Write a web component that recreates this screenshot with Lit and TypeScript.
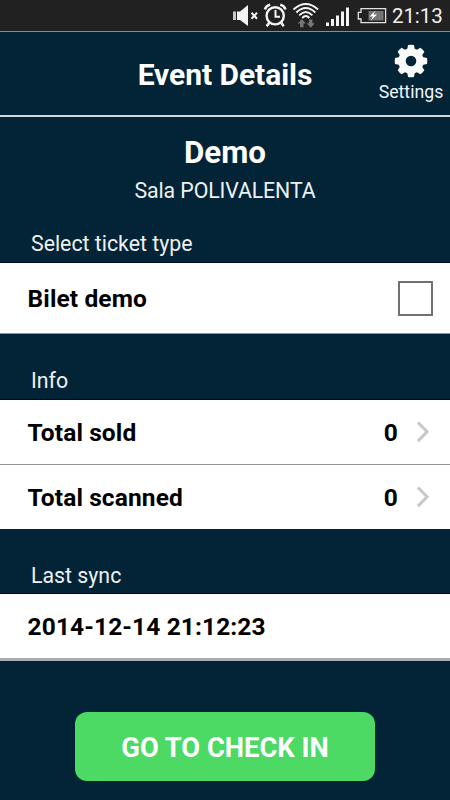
import { LitElement, html, css, svg } from "lit";
import { customElement, property } from "lit/decorators.js";

@customElement("status-bar")
class StatusBar extends LitElement {
  static styles = css`
    :host { display: block; box-sizing: border-box; height: 32px; background: #212121; }
    .icons { display: block; width: 392px; height: 30px; flex: none; }
    .time { font-size: 20.5px; line-height: 33px; color: #f2f2f2; white-space: nowrap; letter-spacing: -0.1px; }
    .bar { display: flex; width: 450px; height: 31px; border-bottom: 1px solid #8c8c8c; }
  `;
  render() {
    return html`<div class="bar">
      <svg class="icons" viewBox="0 0 392 30">
        <path d="M233 11.500h3v8.500h-3z" fill="#c8c8c8" />
        <path d="M237 11.500h3l8-6.500v21l-8-6h-3z" fill="#f4f4f4" />
        <path d="M251.500 12.800l5.500 6M257 12.800l-5.500 6" stroke="#f4f4f4" stroke-width="2" />
        <g fill="none" stroke="#f4f4f4">
          <circle cx="275.200" cy="15.800" r="8.600" stroke-width="2.400" />
          <path d="M275.500 10v6.800h4.500" stroke-width="2" />
          <path d="M265 9.500q1-3.800 5.200-4.700M285.400 9.500q-1-3.800-5.200-4.700" stroke-width="2.600" />
          <path d="M269.200 22.800l-2.500 3.500M281.200 22.800l2.500 3.500" stroke-width="2.600" />
        </g>
        <g fill="none" stroke="#f4f4f4" stroke-width="1.900">
          <path d="M293.500 9.500q12.300-11 24.600 0" />
          <path d="M296.300 12.500q9.500-9 19 0" />
          <path d="M299.200 15.300q6.600-6.600 13.200 0" />
          <path d="M302.200 18q3.600-4 7.200 0" />
        </g>
        <path d="M301.800 19l4 4.500h-2.300v3.800h-3.400v-3.800h-2.300zM310.700 27.700l-4-4.500h2.300v-3.800h3.400v3.800h2.300z" fill="#777" />
        <g fill="#f4f4f4">
          <path d="M326 22.500h3v3.500h-3zM331 19h3v7h-3zM336 15.500h3v10.500h-3zM341 11.500h3v14.500h-3zM346 7.500h3v18.500h-3z" />
        </g>
        <path d="M361 8.600h24.600v14h-24.600v-3.600h-2.700v-6.600h2.700z" fill="none" stroke="#e2e2e2" stroke-width="1.300" />
        <path d="M368.500 11h15v9.500h-15z" fill="#757575" />
        <path d="M375.500 10.500l-6 6h3.500l-2.500 4.500 6.500-6.500h-3.500z" fill="#fff" />
      </svg>
      <span class="time">21:13</span>
    </div>`;
  }
}

const teeth = [0, 45, 90, 135, 180, 225, 270, 315];

@customElement("page-header")
class PageHeader extends LitElement {
  static styles = css`
    :host { display: grid; grid-template-columns: 72px 1fr 72px; box-sizing: border-box; height: 85px; border-bottom: 2px solid #d2d5d6; color: #fff; }
    .title { grid-column: 2; text-align: center; font-size: 30px; font-weight: 700; line-height: 85px; white-space: nowrap; letter-spacing: -0.05px; }
    .settings { display: flex; flex-direction: column; align-items: center; padding: 12px 6px 0 0; }
    .gear { width: 34px; height: 34px; }
    .label { font-size: 17.700px; line-height: 24px; padding-top: 2px; white-space: nowrap; color: #f2f4f5; }
  `;
  render() {
    return html`
      <div class="title">Event Details</div>
      <div class="settings">
        <svg class="gear" viewBox="-17 -17 34 34">
          ${teeth.map((a) => svg`<path transform="rotate(${a})" d="M-4.200-10l1.300-6q2.900-.6 5.800 0l1.300 6z" fill="#fafafa" />`)}
          <circle r="9" fill="none" stroke="#fafafa" stroke-width="7.400" />
        </svg>
        <div class="label">Settings</div>
      </div>`;
  }
}

@customElement("list-row")
class ListRow extends LitElement {
  @property() label = "";
  @property() value = "";
  @property() accessory = "none";
  static styles = css`
    :host { display: flex; align-items: center; background: #fff; color: #000; padding: 0 17px 0 27.600px; font-weight: 700; font-size: 24.500px; letter-spacing: 0.110px; }
    .label { flex: 1; white-space: nowrap; line-height: 30px; padding-top: 2px; }
    .value { line-height: 30px; padding-top: 2px; }
    .box { box-sizing: border-box; width: 35px; height: 35px; border: 2px solid #717171; margin-top: 1px; }
    .chevron { width: 14px; height: 24px; margin: 0 3px 0 18px; }
  `;
  render() {
    return html`
      <span class="label">${this.label}</span>
      ${this.value ? html`<span class="value">${this.value}</span>` : ""}
      ${this.accessory === "check" ? html`<span class="box"></span>` : ""}
      ${this.accessory === "chevron"
        ? html`<svg class="chevron" viewBox="0 0 14 24"><path d="M2 2.500l9 9.300-9 9.300" fill="none" stroke="#c7c7cc" stroke-width="3" /></svg>`
        : ""}`;
  }
}

@customElement("app-root")
class AppRoot extends LitElement {
  static styles = css`
    :host { display: flex; flex-direction: column; width: 450px; height: 800px; overflow: hidden; background: #032437; font-family: Roboto, sans-serif; }
    .event { height: 108px; text-align: center; color: #fff; }
    .name { padding-top: 18px; font-size: 31.300px; font-weight: 700; line-height: 36px; }
    .venue { font-size: 21.300px; line-height: 26px; padding-top: 7px; color: #eef1f3; letter-spacing: -0.100px; }
    .heading { box-sizing: border-box; padding-left: 31px; font-size: 21.300px; line-height: 26px; color: #eef1f3; border-bottom: 1px solid #000a14; }
    .tickets { height: 38px; padding-top: 6px; }
    .info { height: 66px; padding-top: 34px; }
    .sync { height: 65px; padding-top: 34px; }
    .ticket { height: 70px; border-bottom: 1px solid #8f9496; }
    .sold { height: 64px; border-bottom: 1px solid #949494; }
    .scanned { height: 64px; }
    .date { height: 64px; border-bottom: 3px solid #a9adad; }
    .footer { display: flex; justify-content: center; padding-top: 51px; }
    .button { width: 300px; height: 69px; border: 0; padding: 3px 0 0; border-radius: 12px; background: #4cd964; color: #fff; font: 700 27.300px Roboto, sans-serif; white-space: nowrap; }
  `;
  render() {
    return html`
      <status-bar></status-bar>
      <page-header></page-header>
      <div class="event">
        <div class="name">Demo</div>
        <div class="venue">Sala POLIVALENTA</div>
      </div>
      <div class="heading tickets">Select ticket type</div>
      <list-row class="ticket" label="Bilet demo" accessory="check"></list-row>
      <div class="heading info">Info</div>
      <list-row class="sold" label="Total sold" value="0" accessory="chevron"></list-row>
      <list-row class="scanned" label="Total scanned" value="0" accessory="chevron"></list-row>
      <div class="heading sync">Last sync</div>
      <list-row class="date" label="2014-12-14 21:12:23"></list-row>
      <div class="footer"><button class="button">GO TO CHECK IN</button></div>`;
  }
}
